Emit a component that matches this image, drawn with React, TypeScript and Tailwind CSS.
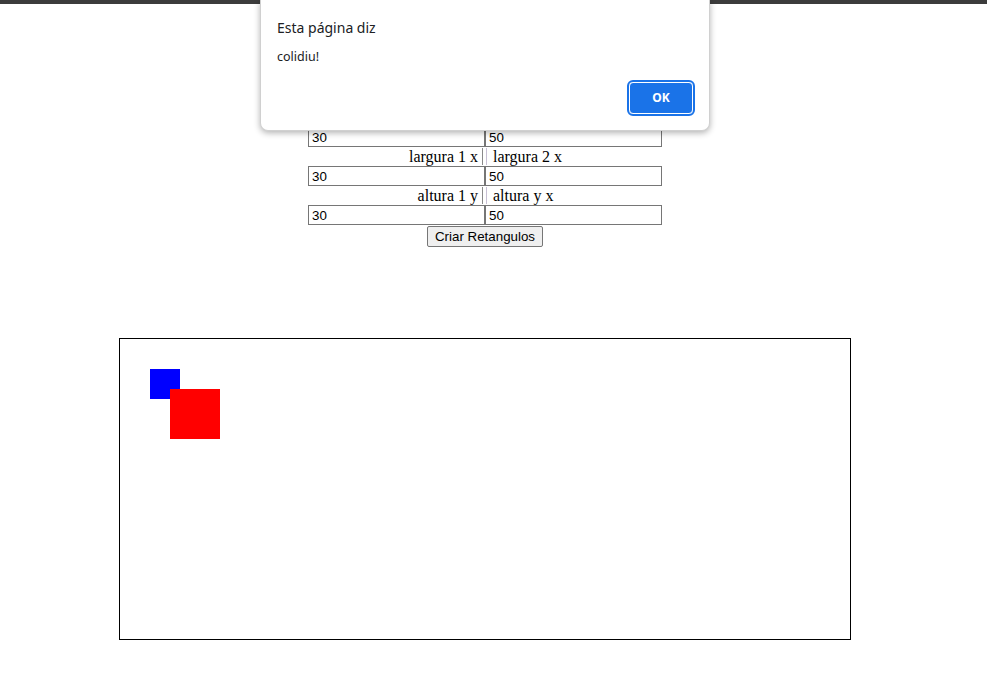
import React from "react";

const rows = [
  { a: "x 1", b: "x 2", va: "30", vb: "50" },
  { a: "largura 1 x", b: "largura 2 x", va: "30", vb: "50" },
  { a: "altura 1 y", b: "altura y x", va: "30", vb: "50" },
];

function LabelRow({ a, b }: { a: string; b: string }) {
  return (
    <div className="flex h-[19px] items-center text-[16px] leading-none text-black [font-family:'Liberation_Serif',serif]">
      <div className="w-[174px] pr-[4px] text-right">{a}</div>
      <div className="h-[17px] w-[1px] bg-[#8a8a8a]" />
      <div className="w-[3px]" />
      <div className="h-[17px] w-[1px] bg-[#c8c0d4]" />
      <div className="w-[175px] pl-[6px]">{b}</div>
    </div>
  );
}

function InputRow({ va, vb }: { va: string; vb: string }) {
  return (
    <div className="flex h-[20px]">
      {[va, vb].map((v, i) => (
        <input
          key={i}
          readOnly
          value={v}
          className="h-[20px] w-[177px] border border-[#767676] bg-white px-[3px] text-[13.33px] text-black outline-none [font-family:'Liberation_Sans',Arial,sans-serif]"
        />
      ))}
    </div>
  );
}

export default function App() {
  return (
    <div className="relative min-h-screen bg-white">
      <div className="h-[4px] bg-[#3c3c3c]" />

      <div className="flex w-[970px] flex-col items-center">
        {/* hidden behind the alert */}
        <div className="mt-[65px] flex flex-col">
          <LabelRow a={rows[0].a} b={rows[0].b} />
          <InputRow va="30" vb="50" />
          <div className="h-[19px]" />
          <InputRow va={rows[0].va} vb={rows[0].vb} />
          {rows.slice(1).map((r) => (
            <React.Fragment key={r.a}>
              <LabelRow a={r.a} b={r.b} />
              <InputRow va={r.va} vb={r.vb} />
            </React.Fragment>
          ))}
        </div>

        <button className="mt-[1px] h-[21px] w-[116px] rounded-[2px] border border-[#767676] bg-[#efefef] text-[13.33px] text-black [font-family:'Liberation_Sans',Arial,sans-serif]">
          Criar Retangulos
        </button>

        <div className="mt-[91px] h-[302px] w-[732px] border border-black">
          <div className="relative h-full w-full">
            <div className="absolute left-[30px] top-[30px] h-[30px] w-[30px] bg-[#0000ff]" />
            <div className="absolute left-[50px] top-[50px] h-[50px] w-[50px] bg-[#ff0000]" />
          </div>
        </div>
      </div>

      {/* alert dialog */}
      <div className="absolute left-[260px] top-0 h-[131px] w-[450px] rounded-b-[8px] border border-t-0 border-[#d0d0d0] bg-white shadow-[0_2px_6px_rgba(0,0,0,0.3)] [font-family:'Noto_Sans',sans-serif]">
        <div className="flex h-full flex-col px-[16px]">
          <div className="mt-[18px] text-[14px] leading-[20px] text-[#202124]">Esta página diz</div>
          <div className="mt-[11px] text-[12.5px] leading-[16px] text-[#202124]">colidiu!</div>
          <div className="mt-auto mb-[16px] flex justify-end">
            <button className="h-[32px] w-[64px] rounded-[4px] border border-white bg-[#1a73e8] text-[12px] font-bold text-white outline outline-2 outline-[#1a73e8]">
              OK
            </button>
          </div>
        </div>
      </div>
    </div>
  );
}
